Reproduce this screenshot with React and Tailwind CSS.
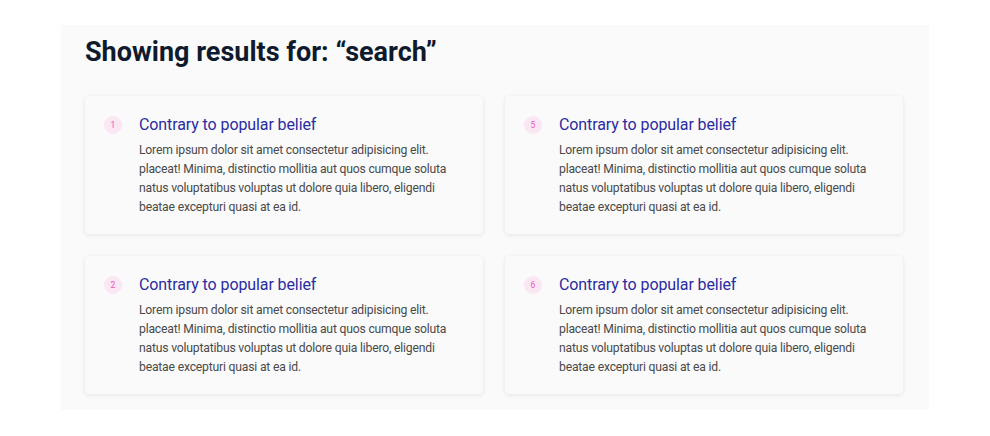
import React from 'react'

const results = [1, 5, 2, 6]

// the reference wraps the paragraph at these points
const lines = [
  'Lorem ipsum dolor sit amet consectetur adipisicing elit.',
  'placeat! Minima, distinctio mollitia aut quos cumque soluta',
  'natus voluptatibus voluptas ut dolore quia libero, eligendi',
  'beatae excepturi quasi at ea id.',
]

function ResultCard({ index }) {
  return (
    <div className="flex gap-[17px] rounded-sm bg-[#fafafa] pl-[19px] pr-4 pt-[17px] pb-[17px] shadow-[0_1px_5px_rgba(0,0,0,0.09)]">
      <div className="mt-[3px] flex h-[18px] w-[18px] shrink-0 items-center justify-center rounded-full bg-[#fbe6f4] text-[8.5px] text-[#e35bb5]">
        {index}
      </div>
      <div className="min-w-0">
        <h3 className="text-[16px] leading-6 tracking-[-0.1px] text-[#2a2c9f]">Contrary to popular belief</h3>
        <p className="mt-1 text-[12.2px] leading-[19px] tracking-[-0.2px] text-[#4a4a4a]">
          {lines.map((l) => (
            <span key={l} className="block whitespace-nowrap">
              {l}
            </span>
          ))}
        </p>
      </div>
    </div>
  )
}

export default function App() {
  return (
    <div className="min-h-screen bg-white pt-[25px] font-['Roboto',sans-serif]">
      <div className="ml-[61px] w-[868px] bg-[#fafafa] pt-[11px] pb-4 pl-6 pr-[26px]">
        <h1 className="text-[27px] font-bold leading-8 text-[#0f1b2d]">
          Showing results for: “search”
        </h1>
        <div className="mt-7 grid grid-cols-2 gap-[22px]">
          {results.map((n) => (
            <ResultCard key={n} index={n} />
          ))}
        </div>
      </div>
    </div>
  )
}
